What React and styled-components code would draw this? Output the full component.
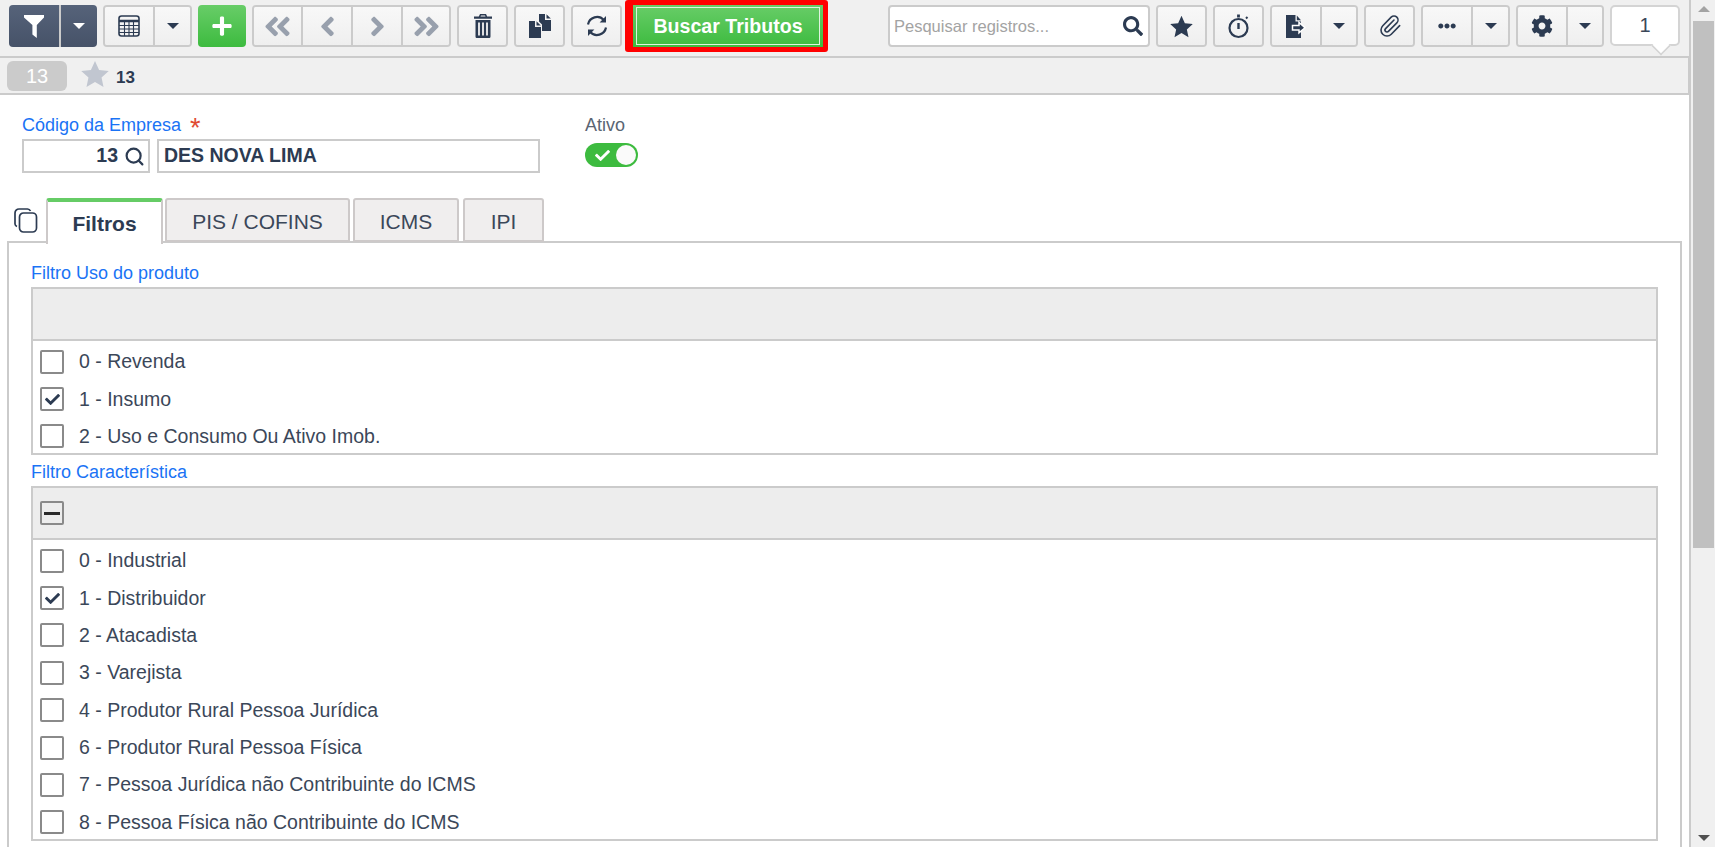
import React from 'react'
import styled, { createGlobalStyle } from 'styled-components'
import { FaAngleDoubleLeft, FaAngleDoubleRight, FaAngleLeft, FaAngleRight, FaCheck, FaCog, FaEllipsisH, FaPlus, FaSearch } from 'react-icons/fa'
import { Paperclip, Search } from 'lucide-react'

const GlobalStyle = createGlobalStyle`
  html, body {
    margin: 0;
    height: 847px;
    overflow: hidden;
    background: #fff;
    font-family: "Liberation Sans", Arial, sans-serif;
    color: #3b4759;
  }
  * {
    box-sizing: border-box;
  }
`

const Page = styled.div`
  display: flex;
  width: 1715px;
  height: 847px;
  overflow: hidden;
`

const Main = styled.div`
  width: 1689px;
  flex: none;
`

const Scrollbar = styled.div`
  flex: 1;
  border-left: 2px solid #cbcbcb;
  background: #f0f0f0;
  padding-left: 2px;
  position: relative;
`

const ScrollThumb = styled.div`
  width: 21px;
  height: 527px;
  margin-top: 21px;
  background: #c0c0c0;
`

const ScrollArrow = styled.div`
  position: absolute;
  left: 7px;
  width: 0;
  height: 0;
  border-left: 6px solid transparent;
  border-right: 6px solid transparent;
  ${p => p.$down
    ? 'bottom: 6px; border-top: 6px solid #505050;'
    : 'top: 6px; border-bottom: 6px solid #a3a3a3;'}
`

const Toolbar = styled.div`
  display: flex;
  height: 58px;
  padding: 5px 0 0 9px;
  background: #f0f0f0;
  border-bottom: 2px solid #cbcbcb;
  gap: 6px;
  position: relative;
`

const Group = styled.div`
  display: flex;
  height: 42px;
  flex: none;
  border: ${p => (p.$dark ? 'none' : '2px solid #cbcbcb')};
  border-radius: 4px;
  overflow: hidden;
`

const ToolButton = styled.div`
  width: ${p => p.$w || 47}px;
  height: 100%;
  display: flex;
  align-items: center;
  justify-content: center;
  font-size: 22px;
  color: ${p => (p.$dark ? '#fff' : p.$muted ? '#98a0ad' : '#2c3b52')};
  background: ${p => (p.$dark
    ? 'linear-gradient(#56637a, #465268)'
    : 'linear-gradient(#f8f8f8, #efefef)')};
  & + & {
    border-left: 2px solid ${p => (p.$dark ? '#475369' : '#cbcbcb')};
  }
`

const Caret = styled.span`
  width: 0;
  height: 0;
  border-left: 6px solid transparent;
  border-right: 6px solid transparent;
  border-top: 6px solid ${p => (p.$light ? '#fff' : '#2c3b52')};
`

const AddButton = styled.div`
  width: 48px;
  height: 42px;
  flex: none;
  border-radius: 4px;
  background: linear-gradient(#68cd68, #3dbb3f);
  color: #fff;
  font-size: 22px;
  display: flex;
  align-items: center;
  justify-content: center;
`

const Highlight = styled.div`
  flex: none;
  height: 52px;
  margin: -5px 0 0 -3px;
  padding: 5px 5px 5px 8px;
  border-radius: 3px;
  background: #f00;
`

const ActionButton = styled.div`
  width: 190px;
  height: 42px;
  padding: 2px 3px;
  background: linear-gradient(#68cd68, #3dbb3f);
`

const ActionInner = styled.div`
  height: 100%;
  border: 1px solid #dff3df;
  color: #fff;
  font-size: 19.6px;
  font-weight: 700;
  display: flex;
  align-items: center;
  justify-content: center;
`

const SearchBox = styled.div`
  width: 262px;
  height: 42px;
  margin-left: 54px;
  flex: none;
  padding: 0 5px 0 4px;
  background: #fff;
  border: 2px solid #cbcbcb;
  border-radius: 4px;
  display: flex;
  align-items: center;
  justify-content: space-between;
  color: #a3a3a3;
  font-size: 16.5px;
  svg {
    color: #2c3b52;
    font-size: 20px;
  }
`

const CounterBox = styled.div`
  width: 70px;
  height: 41px;
  flex: none;
  background: #fff;
  border: 2px solid #d4d4d4;
  border-radius: 5px;
  display: flex;
  align-items: center;
  justify-content: center;
  font-size: 20px;
  position: relative;
  &::after {
    content: '';
    position: absolute;
    right: 9px;
    bottom: -10px;
    width: 14px;
    height: 14px;
    background: #fff;
    border-right: 2px solid #d4d4d4;
    border-bottom: 2px solid #d4d4d4;
    transform: rotate(45deg) scale(0.85);
  }
`

const RecordBar = styled.div`
  height: 37px;
  display: flex;
  align-items: center;
  padding: 1px 0 0 7px;
  background: #f0f0f0;
  border-bottom: 2px solid #cbcbcb;
  border-right: 1px solid #cbcbcb;
`

const RecordBadge = styled.div`
  width: 60px;
  height: 30px;
  background: #cbcbcb;
  border-radius: 6px;
  color: #fff;
  font-size: 20px;
  display: flex;
  align-items: center;
  justify-content: center;
`

const RecordStar = styled.div`
  margin: -4px 0 0 14px;
  color: #c1c6d0;
  display: flex;
`

const RecordName = styled.div`
  margin: 3px 0 0 7px;
  font-size: 17px;
  font-weight: 700;
  color: #2c3b52;
`

const Form = styled.div`
  display: flex;
  padding: 20px 0 0 22px;
  gap: 45px;
`

const FieldLabel = styled.div`
  height: 20px;
  line-height: 20px;
  font-size: 18px;
  color: ${p => (p.$plain ? '#5a6573' : '#1a73f5')};
`

const Required = styled.span`
  margin-left: 9px;
  color: #e04a32;
  font-size: 27px;
  line-height: 20px;
  vertical-align: -6px;
`

const FieldRow = styled.div`
  display: flex;
  margin-top: 4px;
  gap: 7px;
`

const Input = styled.div`
  width: ${p => p.$w}px;
  height: 34px;
  border: 2px solid #cbcbcb;
  display: flex;
  align-items: center;
  justify-content: ${p => (p.$right ? 'flex-end' : 'flex-start')};
  padding: ${p => (p.$right ? '0 3px 2px 0' : '0 0 2px 5px')};
  font-size: 19.5px;
  font-weight: 700;
  color: #2c3b52;
  svg {
    margin: 2px 0 0 6px;
  }
`

const Toggle = styled.div`
  width: 53px;
  height: 24px;
  margin-top: 8px;
  padding: 2px;
  border-radius: 12px;
  background: #3dbb3f;
  display: flex;
  align-items: center;
  justify-content: space-between;
  color: #fff;
  font-size: 15px;
  svg {
    margin-left: 8px;
  }
`

const ToggleKnob = styled.span`
  width: 20px;
  height: 20px;
  border-radius: 50%;
  background: #fafafa;
`

const TabRow = styled.div`
  display: flex;
  height: 44px;
  margin-top: 25px;
  padding-left: 14px;
  position: relative;
  z-index: 1;
`

const CopyTabs = styled.div`
  width: 32px;
  padding-top: 10px;
  color: #2c3b52;
  flex: none;
`

const Tab = styled.div`
  width: ${p => p.$w}px;
  margin-right: ${p => p.$gap}px;
  padding-top: ${p => (p.$active ? 1 : 4)}px;
  border: 2px solid #cdc9c9;
  border-bottom: ${p => (p.$active ? 'none' : '2px solid #cdc9c9')};
  border-top: ${p => (p.$active ? '4px solid #66cc66' : '2px solid #cdc9c9')};
  border-radius: 3px 3px 0 0;
  background: ${p => (p.$active ? '#fff' : '#f0eeee')};
  font-size: 21px;
  font-weight: ${p => (p.$active ? 700 : 400)};
  color: ${p => (p.$active ? '#2c3b52' : '#3b4759')};
  display: flex;
  align-items: center;
  justify-content: center;
  height: ${p => (p.$active ? 46 : 44)}px;
`

const Panel = styled.div`
  margin: -1px 7px 0;
  height: 800px;
  padding: 20px 22px 0;
  border: 2px solid #cbcbcb;
`

const ListLabel = styled(FieldLabel)`
  margin: ${p => (p.$first ? '0 0 4px' : '7px 0 4px')};
`

const ListHeader = styled.div`
  height: 54px;
  padding-left: 7px;
  background: #ededed;
  border: 2px solid #cbcbcb;
  display: flex;
  align-items: center;
`

const List = styled.div`
  padding-top: 2px;
  border: 2px solid #cbcbcb;
  border-top: none;
`

const Row = styled.div`
  height: 37.36px;
  display: flex;
  align-items: center;
  padding-left: 7px;
  font-size: 19.5px;
  &:last-child {
    margin-bottom: -2px;
  }
`

const Box = styled.span`
  width: 24px;
  height: 24px;
  flex: none;
  border: 2px solid #8a8a8a;
  border-radius: 2px;
  display: flex;
  align-items: center;
  justify-content: center;
  color: #2c3b52;
  font-size: 15px;
`

const Dash = styled.span`
  width: 16px;
  height: 3px;
  background: #2b2b2b;
`

const RowText = styled.span`
  margin-left: 15px;
`

const FunnelIcon = () => (
  <svg width="20" height="23" viewBox="0 0 20 23" fill="#fff">
    <path d="M0 0h20v2.4l-7.2 7.6v13l-4.4-3.4V10L0 2.4z" />
  </svg>
)

const TableIcon = () => (
  <svg width="22" height="22" viewBox="0 0 22 22" fill="none" stroke="#2c3b52">
    <rect x="1" y="1" width="20" height="20" rx="2.5" strokeWidth="1.6" />
    <path d="M1 6h20" strokeWidth="2.6" />
    <path d="M1 10.5h20M1 14h20M1 17.5h20M6.5 6v15M11 6v15M15.5 6v15" strokeWidth="1.1" />
  </svg>
)

const TrashIcon = () => (
  <svg width="18" height="24" viewBox="0 0 18 24" fill="#2c3b52">
    <path d="M6 0h6l1.2 2.6H18v2.2H0V2.6h4.8zM7 1.4 6.5 2.6h5L11 1.4z" />
    <path d="M1.5 6h15v16.4c0 .9-.7 1.6-1.6 1.6H3.1c-.9 0-1.6-.7-1.6-1.6zm2.6 2.4v13h1.8v-13zm4 0v13h1.8v-13zm4 0v13h1.8v-13z" fillRule="evenodd" />
  </svg>
)

const CopyIcon = () => (
  <svg width="22" height="24" viewBox="0 0 22 24" fill="#2c3b52">
    <path d="M0 7h6v6h6v11H0z" />
    <path d="M7.5 7.2 11.8 11.6H7.5z" />
    <path d="M10 0h6v6h6v11h-9v-6.5L10 7.5z" />
    <path d="M17.5 .2 21.8 4.6h-4.3z" />
  </svg>
)

const RefreshIcon = () => (
  <svg width="22" height="22" viewBox="0 0 22 22" fill="none" stroke="#2c3b52" strokeWidth="2.2">
    <path d="M2 9.5A9.2 9.2 0 0 1 17.8 5" />
    <path d="M20 12.5A9.2 9.2 0 0 1 4.2 17" />
    <path d="M20 1v6.4h-6.4z M2 21v-6.4h6.4z" fill="#2c3b52" stroke="none" />
  </svg>
)

const StarIcon = ({ size }) => (
  <svg width={size} height={size} viewBox="0 0 24 24" fill="currentColor">
    <path d="M12 .8l3.5 7.7 8.3.9-6.2 5.6 1.7 8.2L12 18.9l-7.3 4.3 1.7-8.2L.2 9.4l8.3-.9z" />
  </svg>
)

const TimerIcon = () => (
  <svg width="22" height="26" viewBox="0 0 22 26" fill="none" stroke="#2c3b52">
    <circle cx="10.5" cy="15" r="9" strokeWidth="2.2" />
    <path d="M10.5 1.5v3" strokeWidth="2.8" />
    <path d="M10.5 10v6" strokeWidth="2.4" />
    <path d="M18 5.5l1.5-1.5" strokeWidth="2" />
  </svg>
)

const ExportIcon = () => (
  <svg width="20" height="23" viewBox="0 0 20 23">
    <path d="M0 0h9.5v6.5H15V23H0z" fill="#2c3b52" />
    <path d="M10.8 .4 15 5.2h-4.2z" fill="#2c3b52" />
    <path d="M6.5 10.5h6.5V7.5l6 5.2-6 5.2v-3h-6.5z" fill="#2c3b52" stroke="#fff" strokeWidth="1.5" />
  </svg>
)

const CopyTabsIcon = () => (
  <svg width="24" height="25" viewBox="0 0 24 25" fill="none" stroke="#2c3b52" strokeWidth="1.7">
    <rect x="5.5" y="5" width="17" height="19" rx="4" />
    <path d="M3 18.5A3 3 0 0 1 1 16V5a4 4 0 0 1 4-4h8.5a3.5 3.5 0 0 1 3 2" />
  </svg>
)

const usoOptions = [
  { label: '0 - Revenda' },
  { label: '1 - Insumo', checked: true },
  { label: '2 - Uso e Consumo Ou Ativo Imob.' }
]

const caracteristicaOptions = [
  { label: '0 - Industrial' },
  { label: '1 - Distribuidor', checked: true },
  { label: '2 - Atacadista' },
  { label: '3 - Varejista' },
  { label: '4 - Produtor Rural Pessoa Jurídica' },
  { label: '6 - Produtor Rural Pessoa Física' },
  { label: '7 - Pessoa Jurídica não Contribuinte do ICMS' },
  { label: '8 - Pessoa Física não Contribuinte do ICMS' }
]

const CheckList = ({ options }) => (
  <List>
    {options.map(o => (
      <Row key={o.label}>
        <Box>{o.checked && <FaCheck />}</Box>
        <RowText>{o.label}</RowText>
      </Row>
    ))}
  </List>
)

export default function App () {
  return (
    <Page>
      <GlobalStyle />
      <Main>
        <Toolbar>
          <Group $dark>
            <ToolButton $dark $w={50}><FunnelIcon /></ToolButton>
            <ToolButton $dark $w={38}><Caret $light /></ToolButton>
          </Group>
          <Group>
            <ToolButton $w={48}><TableIcon /></ToolButton>
            <ToolButton $w={37}><Caret /></ToolButton>
          </Group>
          <AddButton><FaPlus /></AddButton>
          <Group>
            <ToolButton $muted $w={47}><FaAngleDoubleLeft size={31} /></ToolButton>
            <ToolButton $muted $w={50}><FaAngleLeft size={31} /></ToolButton>
            <ToolButton $muted $w={50}><FaAngleRight size={31} /></ToolButton>
            <ToolButton $muted $w={48}><FaAngleDoubleRight size={31} /></ToolButton>
          </Group>
          <Group><ToolButton><TrashIcon /></ToolButton></Group>
          <Group><ToolButton><CopyIcon /></ToolButton></Group>
          <Group><ToolButton><RefreshIcon /></ToolButton></Group>
          <Highlight>
            <ActionButton>
              <ActionInner>Buscar Tributos</ActionInner>
            </ActionButton>
          </Highlight>
          <SearchBox>
            Pesquisar registros...
            <FaSearch />
          </SearchBox>
          <Group><ToolButton><StarIcon size={23} /></ToolButton></Group>
          <Group><ToolButton><TimerIcon /></ToolButton></Group>
          <Group>
            <ToolButton $w={48}><ExportIcon /></ToolButton>
            <ToolButton $w={36}><Caret /></ToolButton>
          </Group>
          <Group><ToolButton><Paperclip size={24} strokeWidth={1.6} /></ToolButton></Group>
          <Group>
            <ToolButton $w={48}><FaEllipsisH size={18} /></ToolButton>
            <ToolButton $w={37}><Caret /></ToolButton>
          </Group>
          <Group>
            <ToolButton $w={48}><FaCog /></ToolButton>
            <ToolButton $w={36}><Caret /></ToolButton>
          </Group>
          <CounterBox>1</CounterBox>
        </Toolbar>
        <RecordBar>
          <RecordBadge>13</RecordBadge>
          <RecordStar><StarIcon size={28} /></RecordStar>
          <RecordName>13</RecordName>
        </RecordBar>
        <Form>
          <div>
            <FieldLabel>Código da Empresa<Required>*</Required></FieldLabel>
            <FieldRow>
              <Input $w={128} $right>13<Search size={21} strokeWidth={2.5} /></Input>
              <Input $w={383}>DES NOVA LIMA</Input>
            </FieldRow>
          </div>
          <div>
            <FieldLabel $plain>Ativo</FieldLabel>
            <Toggle><FaCheck /><ToggleKnob /></Toggle>
          </div>
        </Form>
        <TabRow>
          <CopyTabs><CopyTabsIcon /></CopyTabs>
          <Tab $active $w={117} $gap={2}>Filtros</Tab>
          <Tab $w={185} $gap={3}>PIS / COFINS</Tab>
          <Tab $w={106} $gap={4}>ICMS</Tab>
          <Tab $w={81} $gap={0}>IPI</Tab>
        </TabRow>
        <Panel>
          <ListLabel $first>Filtro Uso do produto</ListLabel>
          <ListHeader />
          <CheckList options={usoOptions} />
          <ListLabel>Filtro Característica</ListLabel>
          <ListHeader><Box><Dash /></Box></ListHeader>
          <CheckList options={caracteristicaOptions} />
        </Panel>
      </Main>
      <Scrollbar>
        <ScrollArrow />
        <ScrollThumb />
        <ScrollArrow $down />
      </Scrollbar>
    </Page>
  )
}
